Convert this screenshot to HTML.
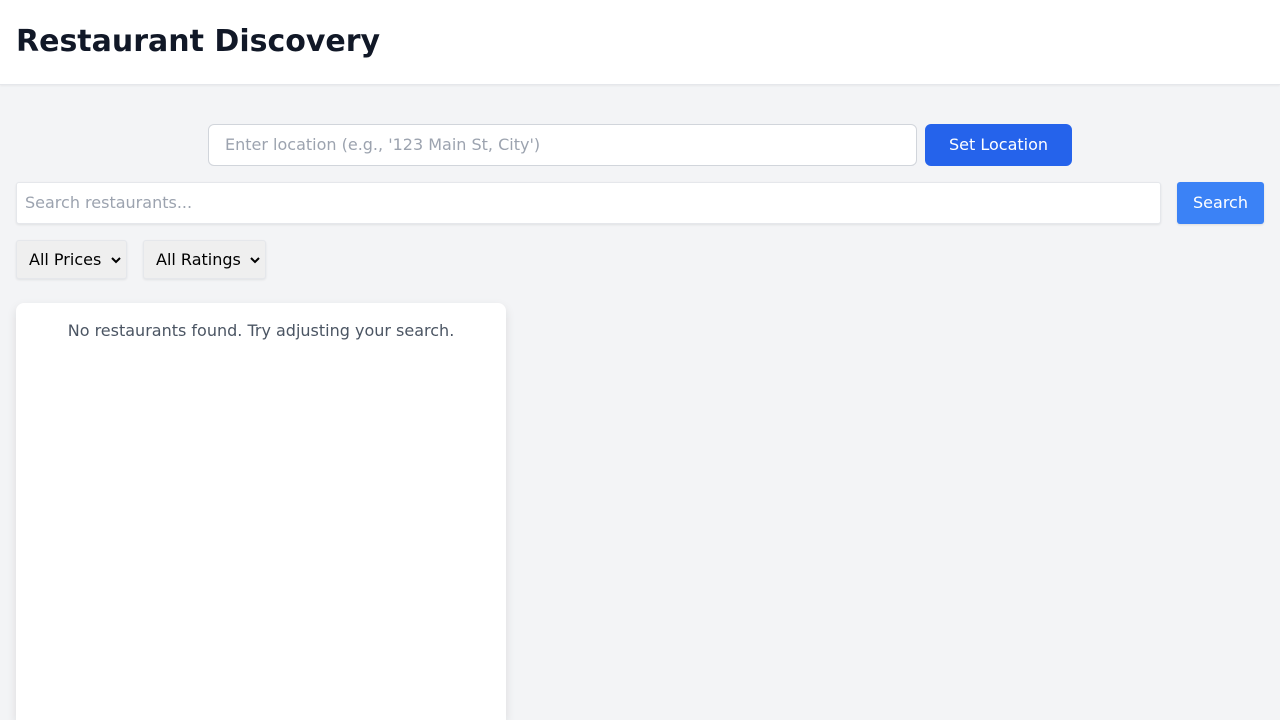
<!DOCTYPE html>
<html><head><style>
*{box-sizing:border-box}
html,body{margin:0;width:1280px;height:720px;overflow:hidden}
body{background:#f3f4f6;font-family:"DejaVu Sans","Liberation Sans",sans-serif;position:relative}
header{background:#fff;height:85px;border-bottom:1px solid #e5e7eb;box-shadow:0 1px 2px rgba(0,0,0,.05)}
h1{margin:0;position:absolute;left:16px;top:24px;font-size:30px;font-weight:bold;color:#111827}
.a{position:absolute}
.loc{left:208px;top:124px;width:709px;height:42px;background:#fff;border:1px solid #d1d5db;border-radius:6px;color:#9ca3af;font-size:16px;padding:10px 16px}
.setb{left:925px;top:124px;width:147px;height:42px;background:#2563eb;color:#fff;border-radius:6px;font-size:16px;text-align:center;line-height:42px}
.srch{left:16px;top:182px;width:1145px;height:42px;background:#fff;border:1px solid #e5e7eb;border-radius:3px;color:#9ca3af;font-size:16px;padding:10px 8px;box-shadow:0 1px 2px rgba(0,0,0,.08)}
.sb{left:1177px;top:182px;width:87px;height:42px;background:#3b82f6;color:#fff;border-radius:3px;font-size:16px;text-align:center;line-height:42px;box-shadow:0 1px 2px rgba(0,0,0,.1)}
.sel{top:240px;height:39px;background:#efefef;border:1px solid #e5e7eb;border-radius:3px;font-size:16px;color:#000;line-height:37px;padding-left:12px;box-shadow:0 1px 2px rgba(0,0,0,.08)}
.sel svg{position:absolute;right:5px;top:15px}
.card{left:16px;top:303px;width:490px;height:417px;background:#fff;border-radius:8px 8px 0 0;box-shadow:0 4px 10px rgba(0,0,0,.1);text-align:center;color:#4b5563;font-size:16px;padding-top:18px}
</style></head><body>
<header><h1>Restaurant Discovery</h1></header>
<div class="a loc">Enter location (e.g., '123 Main St, City')</div>
<div class="a setb">Set Location</div>
<div class="a srch">Search restaurants...</div>
<div class="a sb">Search</div>
<div class="a sel" style="left:16px;width:111px">All Prices<svg width="10" height="8"><path d="M1 2l4 4 4-4" stroke="#000" stroke-width="2" fill="none"/></svg></div>
<div class="a sel" style="left:143px;width:123px">All Ratings<svg width="10" height="8"><path d="M1 2l4 4 4-4" stroke="#000" stroke-width="2" fill="none"/></svg></div>
<div class="a card">No restaurants found. Try adjusting your search.</div>
</body></html>
